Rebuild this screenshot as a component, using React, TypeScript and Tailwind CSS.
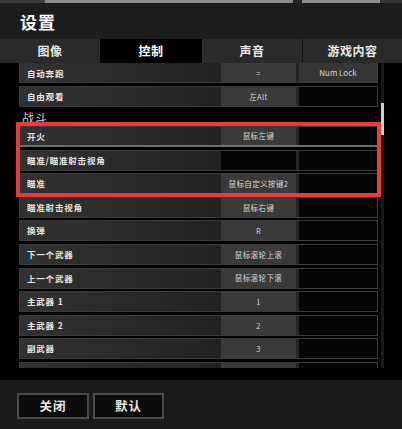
import React from "react";

type RowProps = {
  label: string;
  k1?: string;
  k2?: string;
  k2Gray?: boolean;
  underline?: boolean;
};

function Row({ label, k1, k2, k2Gray, underline }: RowProps) {
  return (
    <div
      className={
        underline
          ? "flex h-[21px] shrink-0 mb-[2.6px] border border-[#3b3b3b] border-b-2 border-b-[#6e6e6e] bg-[#262626]"
          : "flex h-[21px] shrink-0 mb-[2.6px] border border-[#3b3b3b] bg-[#262626]"
      }
    >
      <div className="flex w-[201px] items-center bg-gradient-to-r from-[#323232] to-[#222222] pl-[7px] text-[8.5px] font-bold tracking-[0.8px] text-[#e6e6e6]">
        {label}
      </div>
      <div
        className={
          k1
            ? "flex w-[75px] items-center justify-center bg-[#3a3a3a] text-[7.5px] tracking-[0.4px] text-[#d6d6d6]"
            : "flex w-[75px] items-center justify-center bg-[#050505] text-[7.5px] tracking-[0.4px] text-[#d6d6d6]"
        }
      >
        {k1}
      </div>
      <div className="w-[3px]" />
      <div
        className={
          k2Gray
            ? "flex flex-1 items-center justify-center bg-[#353535] text-[8px] text-[#d6d6d6]"
            : "flex flex-1 items-center justify-center bg-[#050505] text-[8px] text-[#d6d6d6]"
        }
      >
        {k2}
      </div>
    </div>
  );
}

export default function App() {
  const font = { fontFamily: '"Noto Sans CJK SC", "Noto Sans", sans-serif' };
  return (
    <div className="flex h-[429px] w-[402px] flex-col overflow-hidden bg-black" style={font}>
      {/* top strip */}
      <div className="flex h-[3px] shrink-0">
        <div className="w-[45px] bg-[#3a3a3a]" />
        <div className="w-[248px] bg-[#8c8c8c]" />
        <div className="w-[9px] bg-[#222222]" />
        <div className="w-[78px] bg-[#8c8c8c]" />
        <div className="flex-1 bg-[#333333]" />
      </div>
      {/* header */}
      <div className="flex h-[36px] shrink-0 items-center bg-[#1d1d1d] pl-[20px]">
        <span className="text-[17px] font-bold leading-none tracking-[1px] text-white">设置</span>
      </div>
      {/* tabs */}
      <div className="flex h-[24px] shrink-0 bg-[#1d1d1d] text-[12px] font-bold">
        <div className="flex w-[100px] items-center justify-center bg-[#2a2a2a] tracking-[0.5px] text-[#e8e8e8]">图像</div>
        <div className="flex w-[102px] items-center justify-center bg-black tracking-[0.5px] text-white">控制</div>
        <div className="flex w-[100px] items-center justify-center bg-[#2a2a2a] tracking-[0.5px] text-[#e8e8e8]">声音</div>
        <div className="flex flex-1 items-center justify-center border-l border-[#141414] bg-[#2a2a2a] tracking-[0.5px] text-[#e8e8e8]">游戏内容</div>
      </div>
      {/* content */}
      <div className="relative flex h-[305px] shrink-0 bg-black">
        <div className="ml-[19px] flex w-[359px] flex-col overflow-hidden">
          <div className="mt-[-0.6px] flex flex-col">
            <Row label="自动奔跑" k1="=" k2="Num Lock" k2Gray />
            <Row label="自由观看" k1="左Alt" />
            <div className="h-[16.4px] shrink-0 pl-[3px] text-[12px] leading-[16px] tracking-[1px] text-[#cfcfcf]">战斗</div>
            <Row label="开火" k1="鼠标左键" underline />
            <Row label="瞄准/瞄准射击视角" />
            <Row label="瞄准" k1="鼠标自定义按键2" />
            <Row label="瞄准射击视角" k1="鼠标右键" />
            <Row label="换弹" k1="R" />
            <Row label="下一个武器" k1="鼠标滚轮上滚" />
            <Row label="上一个武器" k1="鼠标滚轮下滚" />
            <Row label="主武器 1" k1="1" />
            <Row label="主武器 2" k1="2" />
            <Row label="副武器" k1="3" />
            <Row label="近战武器" k1="4" />
          </div>
        </div>
        {/* scrollbar */}
        <div className="ml-[3px] w-[3px] bg-[#1a1a1a]">
          <div className="mt-[40px] h-[32px] w-[3px] bg-[#cfcfcf]" />
        </div>
        {/* highlight annotation */}
        <div className="absolute left-[16px] top-[59px] h-[75px] w-[365px] border-[4px] border-[#ea3b3b]" />
      </div>
      <div className="h-[12px] shrink-0 bg-black" />
      {/* footer */}
      <div className="flex flex-1 gap-[4px] bg-[#1b1b1b] pl-[17px] pt-[13px]">
        <button className="flex h-[26px] w-[72px] items-center justify-center border-2 border-[#4a4a4a] bg-[#0c0c0c] text-[12.5px] font-bold tracking-[1px] text-[#e8e8e8]">
          关闭
        </button>
        <button className="flex h-[26px] w-[71px] items-center justify-center border-2 border-[#4a4a4a] bg-[#0c0c0c] text-[12.5px] font-bold tracking-[1px] text-[#e8e8e8]">
          默认
        </button>
      </div>
    </div>
  );
}
